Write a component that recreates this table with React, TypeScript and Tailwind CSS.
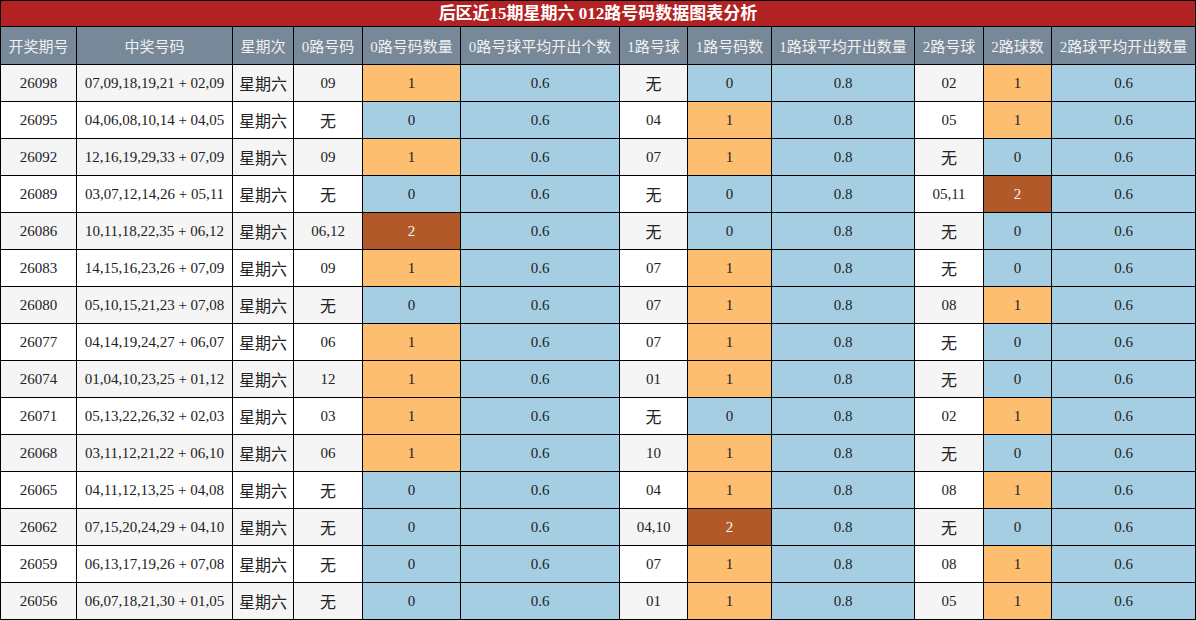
import React from 'react';

type Row = {
  issue: string;
  nums: string;
  r0: string;
  c0: number;
  r1: string;
  c1: number;
  r2: string;
  c2: number;
};

const rows: Row[] = [
  { issue: '26098', nums: '07,09,18,19,21 + 02,09', r0: '09', c0: 1, r1: '无', c1: 0, r2: '02', c2: 1 },
  { issue: '26095', nums: '04,06,08,10,14 + 04,05', r0: '无', c0: 0, r1: '04', c1: 1, r2: '05', c2: 1 },
  { issue: '26092', nums: '12,16,19,29,33 + 07,09', r0: '09', c0: 1, r1: '07', c1: 1, r2: '无', c2: 0 },
  { issue: '26089', nums: '03,07,12,14,26 + 05,11', r0: '无', c0: 0, r1: '无', c1: 0, r2: '05,11', c2: 2 },
  { issue: '26086', nums: '10,11,18,22,35 + 06,12', r0: '06,12', c0: 2, r1: '无', c1: 0, r2: '无', c2: 0 },
  { issue: '26083', nums: '14,15,16,23,26 + 07,09', r0: '09', c0: 1, r1: '07', c1: 1, r2: '无', c2: 0 },
  { issue: '26080', nums: '05,10,15,21,23 + 07,08', r0: '无', c0: 0, r1: '07', c1: 1, r2: '08', c2: 1 },
  { issue: '26077', nums: '04,14,19,24,27 + 06,07', r0: '06', c0: 1, r1: '07', c1: 1, r2: '无', c2: 0 },
  { issue: '26074', nums: '01,04,10,23,25 + 01,12', r0: '12', c0: 1, r1: '01', c1: 1, r2: '无', c2: 0 },
  { issue: '26071', nums: '05,13,22,26,32 + 02,03', r0: '03', c0: 1, r1: '无', c1: 0, r2: '02', c2: 1 },
  { issue: '26068', nums: '03,11,12,21,22 + 06,10', r0: '06', c0: 1, r1: '10', c1: 1, r2: '无', c2: 0 },
  { issue: '26065', nums: '04,11,12,13,25 + 04,08', r0: '无', c0: 0, r1: '04', c1: 1, r2: '08', c2: 1 },
  { issue: '26062', nums: '07,15,20,24,29 + 04,10', r0: '无', c0: 0, r1: '04,10', c1: 2, r2: '无', c2: 0 },
  { issue: '26059', nums: '06,13,17,19,26 + 07,08', r0: '无', c0: 0, r1: '07', c1: 1, r2: '08', c2: 1 },
  { issue: '26056', nums: '06,07,18,21,30 + 01,05', r0: '无', c0: 0, r1: '01', c1: 1, r2: '05', c2: 1 },
];

const headers = [
  '开奖期号',
  '中奖号码',
  '星期次',
  '0路号码',
  '0路号码数量',
  '0路号球平均开出个数',
  '1路号球',
  '1路号码数',
  '1路球平均开出数量',
  '2路号球',
  '2路球数',
  '2路球平均开出数量',
];

// count cell colour: 0 blue, 1 orange, 2 brown
function countClass(n: number) {
  if (n === 2) return 'bg-[#b15928] text-[#f5f5f5]';
  if (n === 1) return 'bg-[#fdbf6f]';
  return 'bg-[#a6cee3]';
}

function Cell({ children, className = '' }: { children: React.ReactNode; className?: string }) {
  return <div className={`flex items-center justify-center ${className}`}>{children}</div>;
}

// CJK glyphs sit a little lower in the original
const cjk = 'text-[16px] pt-1';

export default function App() {
  return (
    <div
      className="w-[1196px] h-[620px] bg-black p-px text-[15px] text-[#222]"
      style={{ fontFamily: '"Liberation Serif", "Noto Sans CJK SC", serif' }}
    >
      <div className="h-[25px] bg-[#b22222] flex items-center justify-center text-white font-bold text-[17px]">
        后区近15期星期六 012路号码数据图表分析
      </div>
      <div className="grid grid-cols-[75px_155px_60px_68px_97px_158px_67px_83px_142px_68px_67px_143px] auto-rows-[36px] grid-rows-[37px] gap-px mt-px">
        {headers.map((h) => (
          <Cell key={h} className="bg-[#778899] text-[#f0f0f0] text-[15px] pt-1">
            {h}
          </Cell>
        ))}
        {rows.map((r, i) => {
          const base = i % 2 === 0 ? 'bg-[#f5f5f5]' : 'bg-white';
          return (
            <React.Fragment key={r.issue}>
              <Cell className={base}>{r.issue}</Cell>
              <Cell className={base}>{r.nums}</Cell>
              <Cell className={`${base} ${cjk}`}>星期六</Cell>
              <Cell className={`${base} ${r.r0 === '无' ? cjk : ''}`}>{r.r0}</Cell>
              <Cell className={countClass(r.c0)}>{r.c0}</Cell>
              <Cell className="bg-[#a6cee3]">0.6</Cell>
              <Cell className={`${base} ${r.r1 === '无' ? cjk : ''}`}>{r.r1}</Cell>
              <Cell className={countClass(r.c1)}>{r.c1}</Cell>
              <Cell className="bg-[#a6cee3]">0.8</Cell>
              <Cell className={`${base} ${r.r2 === '无' ? cjk : ''}`}>{r.r2}</Cell>
              <Cell className={countClass(r.c2)}>{r.c2}</Cell>
              <Cell className="bg-[#a6cee3]">0.6</Cell>
            </React.Fragment>
          );
        })}
      </div>
    </div>
  );
}
